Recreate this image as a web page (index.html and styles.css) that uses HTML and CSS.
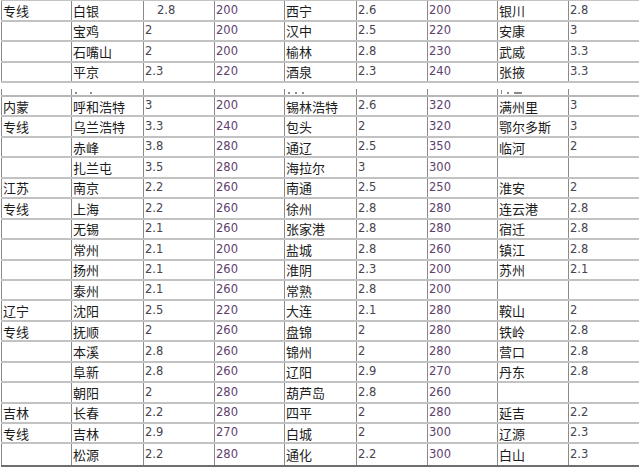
FILE: index.html
```html
<!DOCTYPE html>
<html lang="zh">
<head>
<meta charset="utf-8">
<title>专线价格表</title>
<link rel="stylesheet" href="styles.css">
</head>
<body>
<div class="sheet">
  <div class="block block-top">
    <div class="row"><div class="c">专线</div><div class="c">白银</div><div class="c na indent">2.8</div><div class="c nb">200</div><div class="c">西宁</div><div class="c na">2.6</div><div class="c nb">200</div><div class="c">银川</div><div class="c na">2.8</div></div>
    <div class="row"><div class="c"></div><div class="c">宝鸡</div><div class="c na">2</div><div class="c nb">200</div><div class="c">汉中</div><div class="c na">2.5</div><div class="c nb">220</div><div class="c">安康</div><div class="c na">3</div></div>
    <div class="row"><div class="c"></div><div class="c">石嘴山</div><div class="c na">2</div><div class="c nb">200</div><div class="c">榆林</div><div class="c na">2.8</div><div class="c nb">230</div><div class="c">武威</div><div class="c na">3.3</div></div>
    <div class="row"><div class="c"></div><div class="c">平京</div><div class="c na">2.3</div><div class="c nb">220</div><div class="c">酒泉</div><div class="c na">2.3</div><div class="c nb">240</div><div class="c">张掖</div><div class="c na">3.3</div></div>
  </div>
  <div class="gap"></div>
  <div class="row partial">
    <div class="c"></div>
    <div class="c"><span class="mark m-dot"></span><span class="mark m-dot m-far"></span></div>
    <div class="c"></div>
    <div class="c"></div>
    <div class="c"><span class="mark m-dot"></span><span class="mark m-dot"></span><span class="mark m-dot"></span></div>
    <div class="c"></div>
    <div class="c"></div>
    <div class="c"><span class="mark m-bar"></span><span class="mark m-dot"></span><span class="mark m-wide"></span></div>
    <div class="c"></div>
  </div>
  <div class="block block-main">
    <div class="row"><div class="c">内蒙</div><div class="c">呼和浩特</div><div class="c na">3</div><div class="c nb">200</div><div class="c">锡林浩特</div><div class="c na">2.6</div><div class="c nb">320</div><div class="c">满州里</div><div class="c na">3</div></div>
    <div class="row"><div class="c">专线</div><div class="c">乌兰浩特</div><div class="c na">3.3</div><div class="c nb">240</div><div class="c">包头</div><div class="c na">2</div><div class="c nb">320</div><div class="c">鄂尔多斯</div><div class="c na">3</div></div>
    <div class="row"><div class="c"></div><div class="c">赤峰</div><div class="c na">3.8</div><div class="c nb">280</div><div class="c">通辽</div><div class="c na">2.5</div><div class="c nb">350</div><div class="c">临河</div><div class="c na">2</div></div>
    <div class="row"><div class="c"></div><div class="c">扎兰屯</div><div class="c na">3.5</div><div class="c nb">280</div><div class="c">海拉尔</div><div class="c na">3</div><div class="c nb">300</div><div class="c"></div><div class="c"></div></div>
    <div class="row"><div class="c">江苏</div><div class="c">南京</div><div class="c na">2.2</div><div class="c nb">260</div><div class="c">南通</div><div class="c na">2.5</div><div class="c nb">250</div><div class="c">淮安</div><div class="c na">2</div></div>
    <div class="row"><div class="c">专线</div><div class="c">上海</div><div class="c na">2.2</div><div class="c nb">260</div><div class="c">徐州</div><div class="c na">2.8</div><div class="c nb">280</div><div class="c">连云港</div><div class="c na">2.8</div></div>
    <div class="row"><div class="c"></div><div class="c">无锡</div><div class="c na">2.1</div><div class="c nb">260</div><div class="c">张家港</div><div class="c na">2.8</div><div class="c nb">280</div><div class="c">宿迁</div><div class="c na">2.8</div></div>
    <div class="row"><div class="c"></div><div class="c">常州</div><div class="c na">2.1</div><div class="c nb">200</div><div class="c">盐城</div><div class="c na">2.8</div><div class="c nb">260</div><div class="c">镇江</div><div class="c na">2.8</div></div>
    <div class="row"><div class="c"></div><div class="c">扬州</div><div class="c na">2.1</div><div class="c nb">260</div><div class="c">淮阴</div><div class="c na">2.3</div><div class="c nb">200</div><div class="c">苏州</div><div class="c na">2.1</div></div>
    <div class="row"><div class="c"></div><div class="c">泰州</div><div class="c na">2.1</div><div class="c nb">260</div><div class="c">常熟</div><div class="c na">2.8</div><div class="c nb">200</div><div class="c"></div><div class="c"></div></div>
    <div class="row"><div class="c">辽宁</div><div class="c">沈阳</div><div class="c na">2.5</div><div class="c nb">220</div><div class="c">大连</div><div class="c na">2.1</div><div class="c nb">280</div><div class="c">鞍山</div><div class="c na">2</div></div>
    <div class="row"><div class="c">专线</div><div class="c">抚顺</div><div class="c na">2</div><div class="c nb">260</div><div class="c">盘锦</div><div class="c na">2</div><div class="c nb">280</div><div class="c">铁岭</div><div class="c na">2.8</div></div>
    <div class="row"><div class="c"></div><div class="c">本溪</div><div class="c na">2.8</div><div class="c nb">260</div><div class="c">锦州</div><div class="c na">2</div><div class="c nb">280</div><div class="c">营口</div><div class="c na">2.8</div></div>
    <div class="row"><div class="c"></div><div class="c">阜新</div><div class="c na">2.8</div><div class="c nb">260</div><div class="c">辽阳</div><div class="c na">2.9</div><div class="c nb">270</div><div class="c">丹东</div><div class="c na">2.8</div></div>
    <div class="row"><div class="c"></div><div class="c">朝阳</div><div class="c na">2</div><div class="c nb">280</div><div class="c">葫芦岛</div><div class="c na">2.8</div><div class="c nb">260</div><div class="c"></div><div class="c"></div></div>
    <div class="row"><div class="c">吉林</div><div class="c">长春</div><div class="c na">2.2</div><div class="c nb">280</div><div class="c">四平</div><div class="c na">2</div><div class="c nb">280</div><div class="c">延吉</div><div class="c na">2.2</div></div>
    <div class="row"><div class="c">专线</div><div class="c">吉林</div><div class="c na">2.9</div><div class="c nb">270</div><div class="c">白城</div><div class="c na">2</div><div class="c nb">300</div><div class="c">辽源</div><div class="c na">2.3</div></div>
    <div class="row"><div class="c"></div><div class="c">松源</div><div class="c na">2.2</div><div class="c nb">280</div><div class="c">通化</div><div class="c na">2.2</div><div class="c nb">300</div><div class="c">白山</div><div class="c na">2.3</div></div>
  </div>
</div>
</body>
</html>
```

FILE: styles.css
```css
html, body {
  margin: 0;
  padding: 0;
  background: #ffffff;
}

body {
  width: 639px;
  height: 470px;
  overflow: hidden;
  font-family: "Noto Sans CJK SC", "DejaVu Sans", sans-serif;
  font-size: 13px;
  color: #1c1c1c;
}

.sheet {
  display: flex;
  flex-direction: column;
  padding-left: 1px;
}

.block {
  display: flex;
  flex-direction: column;
}

.block-top {
  border-top: 1px solid #c4c4c4;
}

.block-main {
  border-top: 2px solid #b8b8b8;
  border-bottom: 2px solid #6e6e6e;
}

.row {
  display: grid;
  grid-template-columns: 70px 72px 71px 70px 72px 71px 70px 71px 72px;
  height: 20.45px;
  box-sizing: border-box;
  border-bottom: 2px solid #c2c2c2;
}

.block-top .row {
  height: 20.5px;
}

.block-main .row:last-child {
  border-bottom: none;
}

.c {
  border-left: 1px solid #8a8a8a;
  padding-left: 1px;
  display: flex;
  align-items: center;
  white-space: nowrap;
  overflow: hidden;
  line-height: 1;
}

.na,
.nb {
  font-family: "DejaVu Sans", sans-serif;
  font-size: 11.5px;
  color: #45454f;
}

.nb {
  color: #5e416e;
}

.indent {
  padding-left: 13px;
}

.gap {
  height: 6px;
}

.partial {
  height: 6px;
  border-bottom: none;
}

.partial .c {
  align-items: flex-end;
  gap: 5px;
  padding-left: 3px;
  padding-bottom: 1px;
  box-sizing: border-box;
}

.mark {
  display: block;
  background: #8a8a8a;
}

.m-dot {
  width: 2px;
  height: 2px;
}

.m-far {
  margin-left: 8px;
}

.m-bar {
  width: 1px;
  height: 4px;
}

.m-wide {
  width: 8px;
  height: 2px;
}
```
